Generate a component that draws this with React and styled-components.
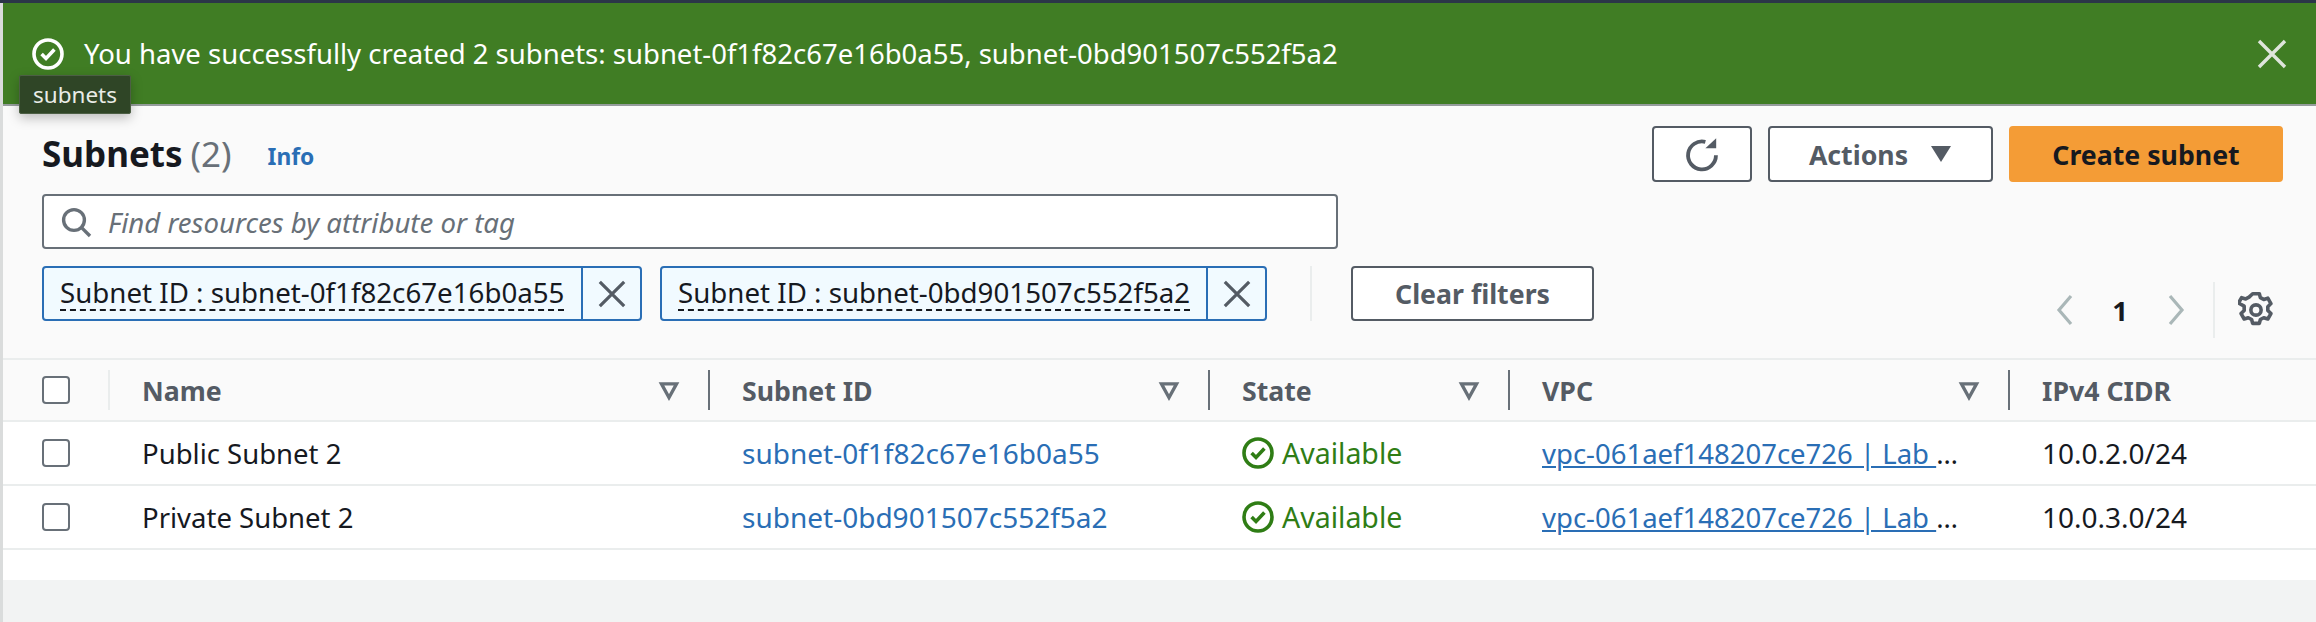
import React from "react"
import styled, { createGlobalStyle } from "styled-components"

const GlobalStyle = createGlobalStyle`
  html, body {
    margin: 0;
    background: #ffffff;
  }
  body {
    font-family: "Noto Sans", "Open Sans", sans-serif;
    color: #16191f;
    overflow: hidden;
  }
  * {
    box-sizing: border-box;
  }
`

const Page = styled.div`
  width: 2316px;
  height: 622px;
  overflow: hidden;
  display: flex;
  flex-direction: column;
`

const TopStrip = styled.div`
  height: 3px;
  background: #2b3548;
`

const Body = styled.div`
  flex: 1;
  display: flex;
  flex-direction: column;
  border-left: 3px solid #dadcdc;
  background: #f2f3f3;
`

const Banner = styled.div`
  position: relative;
  height: 103px;
  display: flex;
  align-items: center;
  padding: 0 28px 0 29px;
  background: #407d24;
  border-bottom: 2px solid #959c9c;
  color: #ffffff;
  font-size: 27.5px;
`

const BannerText = styled.span`
  margin-left: 20px;
`

const CloseButton = styled.span`
  display: flex;
  margin-left: auto;
  color: #dfe5dc;
`

const Tooltip = styled.div`
  position: absolute;
  left: 16px;
  top: 72px;
  width: 112px;
  height: 39px;
  display: flex;
  align-items: center;
  justify-content: center;
  background: #2f4526;
  border: 1px solid #4c5f44;
  border-radius: 2px;
  box-shadow: 0 4px 12px rgba(0, 0, 0, 0.25);
  color: #e9ece7;
  font-size: 22.5px;
`

const Toolbar = styled.div`
  height: 252px;
  padding: 20px 33px 0 39px;
  background: #fafafa;
`

const HeaderRow = styled.div`
  display: flex;
  align-items: flex-start;
  height: 56px;
`

const Title = styled.h1`
  margin: 0;
  font-size: 35px;
  line-height: 40px;
  font-weight: 700;
  margin-top: 8px;
`

const Count = styled.span`
  margin-left: 8px;
  font-weight: 400;
  color: #687078;
`

const InfoLink = styled.a`
  margin: 17px 0 0 36px;
  color: #2a6eb5;
  font-size: 22.8px;
  line-height: 28px;
  font-weight: 700;
`

const Actions = styled.div`
  display: flex;
  gap: 16px;
  margin-left: auto;
`

const Button = styled.button`
  height: ${props => props.$height || 56}px;
  width: ${props => props.$width}px;
  display: flex;
  align-items: center;
  justify-content: center;
  gap: 22px;
  padding: 0;
  background: ${props => (props.$primary ? "#f49c36" : "#ffffff")};
  border: 2px solid ${props => (props.$primary ? "#f49c36" : "#545b64")};
  border-radius: 4px;
  color: ${props => (props.$primary ? "#16191f" : "#545b64")};
  font-family: inherit;
  font-size: 26.7px;
  font-weight: 700;
`

const SearchBox = styled.div`
  width: 1296px;
  height: 55px;
  margin-top: 12px;
  display: flex;
  align-items: center;
  gap: 16px;
  padding: 0 16px;
  background: #ffffff;
  border: 2px solid #687078;
  border-radius: 4px;
  color: #687078;
  font-size: 27.6px;
  font-style: italic;
`

const FilterRow = styled.div`
  display: flex;
  align-items: flex-start;
  margin-top: 17px;
`

const Token = styled.div`
  display: flex;
  height: 55px;
  margin-right: 18px;
  background: #f1faff;
  border: 2px solid #2a6eb5;
  border-radius: 4px;
`

const TokenLabel = styled.div`
  width: ${props => props.$width}px;
  display: flex;
  align-items: center;
  padding-left: 16px;
  border-right: 2px solid #2a6eb5;
  font-size: 27.7px;
`

const TokenText = styled.span`
  line-height: 33px;
  white-space: nowrap;
  border-bottom: 2px dashed #16191f;
`

const TokenClose = styled.span`
  width: 57px;
  display: flex;
  align-items: center;
  justify-content: center;
  color: #545b64;
`

const FilterDivider = styled.span`
  width: 2px;
  height: 55px;
  margin: 0 39px 0 25px;
  background: #eaeded;
`

const Pager = styled.div`
  display: flex;
  align-items: center;
  height: 56px;
  margin: 16px 12px 0 auto;
  color: #16191f;
`

const PagerSlot = styled.span`
  width: ${props => props.$width}px;
  display: flex;
  justify-content: center;
  margin-left: ${props => props.$gap || 0}px;
  color: ${props => props.$color || "inherit"};
  font-size: 27.5px;
  font-weight: 700;
`

const PagerDivider = styled.span`
  width: 2px;
  height: 56px;
  margin: 0 26px 0 25px;
  background: #eaeded;
`

const Table = styled.div`
  background: #ffffff;
  padding-bottom: 30px;
  border-top: 2px solid #eaeded;
`

const Row = styled.div`
  display: grid;
  grid-template-columns: 107px 600px 500px 300px 500px 1fr;
  height: ${props => (props.$head ? 62 : 64)}px;
  background: ${props => (props.$head ? "#fafafa" : "#ffffff")};
  border-bottom: 2px solid #eaeded;
`

const HeadCell = styled.div`
  display: flex;
  align-items: center;
  padding-left: ${props => (props.$check ? 39 : 32)}px;
  color: #545b64;
  font-size: 26.7px;
  font-weight: 700;
`

const SortIcon = styled.span`
  display: flex;
  margin-left: auto;
  margin-right: 28px;
  color: #687078;
`

const ColumnDivider = styled.span`
  width: 2px;
  height: 40px;
  margin-left: ${props => (props.$push ? "auto" : 0)};
  background: ${props => (props.$light ? "#eaeded" : "#687078")};
`

const Cell = styled.div`
  display: flex;
  align-items: center;
  padding-left: ${props => (props.$check ? 39 : 32)}px;
  font-size: ${props => (props.$mono ? 28 : 27.5)}px;
  white-space: nowrap;
`

const Checkbox = styled.span`
  width: 28px;
  height: 28px;
  background: #ffffff;
  border: 2px solid #687078;
  border-radius: 4px;
`

const TableLink = styled.a`
  color: #2a6eb5;
`

const Status = styled.span`
  display: flex;
  align-items: center;
  gap: 8px;
  color: #2f7d15;
  font-size: 28.5px;
`

const VpcCell = styled.div`
  align-self: center;
  padding: 0 46px 0 32px;
  font-size: 27.5px;
  white-space: nowrap;
  overflow: hidden;
  text-overflow: ellipsis;
`

const VpcLink = styled.a`
  color: #2a6eb5;
  text-decoration: underline;
`

const Footer = styled.div`
  flex: 1;
  background: #f2f3f3;
`

const CheckCircle = ({ size }) => (
  <svg width={size} height={size} viewBox="0 0 16 16" fill="none" stroke="currentColor" strokeWidth="1.8">
    <circle cx="8" cy="8" r="7" />
    <polyline points="4.8 8 7 10.2 11.2 5.8" strokeWidth="1.8" />
  </svg>
)

const CloseIcon = ({ size }) => (
  <svg width={size} height={size} viewBox="0 0 16 16" fill="none" stroke="currentColor" strokeWidth="1.7">
    <path d="M1.5 1.5l13 13M14.5 1.5l-13 13" />
  </svg>
)

const SearchIcon = () => (
  <svg width="32" height="32" viewBox="0 0 16 16" fill="none" stroke="currentColor" strokeWidth="1.7">
    <circle cx="7" cy="7" r="5.2" />
    <path d="M10.8 10.8L15 15" />
  </svg>
)

const RefreshIcon = () => (
  <svg width="36" height="36" viewBox="0 0 16 16" fill="none" stroke="currentColor" strokeWidth="1.7">
    <path d="M9.5 2.6A6.2 6.2 0 1 0 14.2 8.6" />
    <path d="M9.5 5.4h4.8V1z" fill="currentColor" stroke="none" />
  </svg>
)

const CaretFilled = () => (
  <svg width="22" height="18" viewBox="0 0 22 18" fill="currentColor">
    <path d="M1 1h20L11 17z" />
  </svg>
)

const CaretOutline = () => (
  <svg width="22" height="26" viewBox="0 0 16 16" fill="none" stroke="currentColor" strokeWidth="2.4">
    <path d="M2.5 3.5h11L8 13.5z" />
  </svg>
)

const Chevron = ({ flip }) => (
  <svg width="20" height="32" viewBox="0 0 10 16" fill="none" stroke="currentColor" strokeWidth="1.6">
    <path d={flip ? "M2 1l6 7-6 7" : "M8 1L2 8l6 7"} />
  </svg>
)

const GearIcon = () => (
  <svg width="36" height="36" viewBox="1 1 14 14" fill="none" stroke="currentColor" strokeWidth="1.4" strokeLinejoin="round" style={{ flexShrink: 0 }}>
    <circle cx="8" cy="8" r="2" />
    <path d="M6.7 1.7h2.6l.4 1.5 1.3.7 1.6-.5 1.2 2.1-1.2 1.2v1.5l1.2 1.2-1.2 2.1-1.6-.5-1.3.7-.4 1.5H6.7l-.4-1.5-1.3-.7-1.6.5-1.2-2.1 1.2-1.2V6.5L1.2 5.3l1.2-2.1 1.6.5 1.3-.7z" />
  </svg>
)

const columns = ["Name", "Subnet ID", "State", "VPC"]

const subnets = [
  { name: "Public Subnet 2", id: "subnet-0f1f82c67e16b0a55", cidr: "10.0.2.0/24", tokenWidth: 539 },
  { name: "Private Subnet 2", id: "subnet-0bd901507c552f5a2", cidr: "10.0.3.0/24", tokenWidth: 546 },
]

const App = () => (
  <Page>
    <GlobalStyle />
    <TopStrip />
    <Body>
      <Banner>
        <CheckCircle size={32} />
        <BannerText>
          You have successfully created 2 subnets: subnet-0f1f82c67e16b0a55, subnet-0bd901507c552f5a2
        </BannerText>
        <CloseButton>
          <CloseIcon size={32} />
        </CloseButton>
        <Tooltip>subnets</Tooltip>
      </Banner>
      <Toolbar>
        <HeaderRow>
          <Title>
            Subnets<Count>(2)</Count>
          </Title>
          <InfoLink>Info</InfoLink>
          <Actions>
            <Button $width={100}>
              <RefreshIcon />
            </Button>
            <Button $width={225}>
              Actions
              <CaretFilled />
            </Button>
            <Button $width={274} $primary>
              Create subnet
            </Button>
          </Actions>
        </HeaderRow>
        <SearchBox>
          <SearchIcon />
          Find resources by attribute or tag
        </SearchBox>
        <FilterRow>
          {subnets.map(subnet => (
            <Token key={subnet.id}>
              <TokenLabel $width={subnet.tokenWidth}>
                <TokenText>Subnet ID : {subnet.id}</TokenText>
              </TokenLabel>
              <TokenClose>
                <CloseIcon size={30} />
              </TokenClose>
            </Token>
          ))}
          <FilterDivider />
          <Button $width={243} $height={55}>
            Clear filters
          </Button>
          <Pager>
            <PagerSlot $width={24} $color="#aab7b8">
              <Chevron />
            </PagerSlot>
            <PagerSlot $width={40} $gap={23}>
              1
            </PagerSlot>
            <PagerSlot $width={24} $gap={24} $color="#aab7b8">
              <Chevron flip />
            </PagerSlot>
            <PagerDivider />
            <PagerSlot $width={30} $color="#545b64">
              <GearIcon />
            </PagerSlot>
          </Pager>
        </FilterRow>
      </Toolbar>
      <Table>
        <Row $head>
          <HeadCell $check>
            <Checkbox />
            <ColumnDivider $push $light />
          </HeadCell>
          {columns.map(column => (
            <HeadCell key={column}>
              {column}
              <SortIcon>
                <CaretOutline />
              </SortIcon>
              <ColumnDivider />
            </HeadCell>
          ))}
          <HeadCell>IPv4 CIDR</HeadCell>
        </Row>
        {subnets.map(subnet => (
          <Row key={subnet.id}>
            <Cell $check>
              <Checkbox />
            </Cell>
            <Cell>{subnet.name}</Cell>
            <Cell $mono>
              <TableLink>{subnet.id}</TableLink>
            </Cell>
            <Cell>
              <Status>
                <CheckCircle size={32} />
                Available
              </Status>
            </Cell>
            <VpcCell>
              <VpcLink>vpc-061aef148207ce726 | Lab VPC</VpcLink>
            </VpcCell>
            <Cell $mono>{subnet.cidr}</Cell>
          </Row>
        ))}
      </Table>
      <Footer />
    </Body>
  </Page>
)

export default App
